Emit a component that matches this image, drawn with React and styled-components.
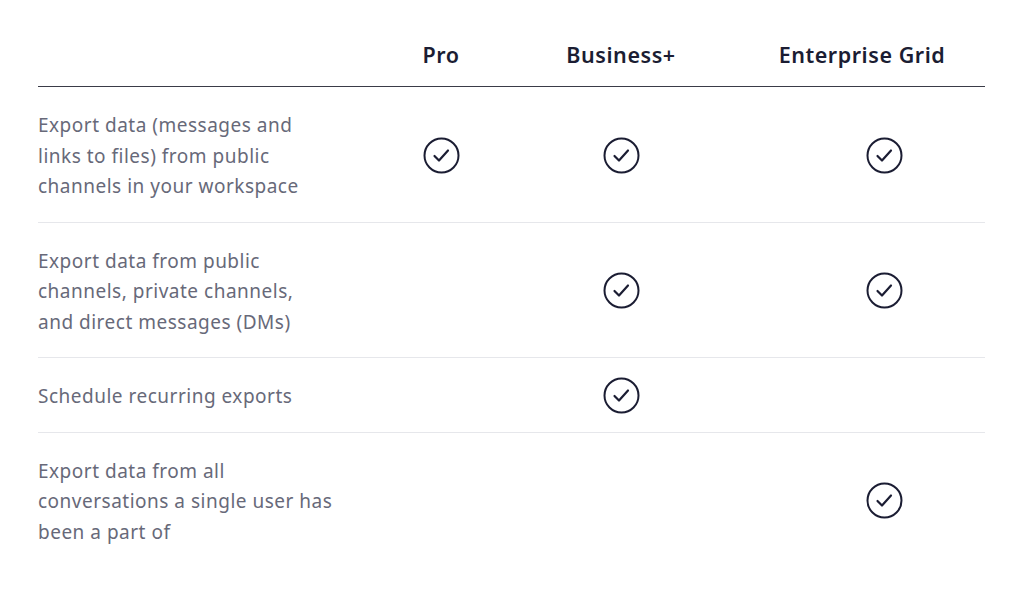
import React from "react";
import styled, { createGlobalStyle } from "styled-components";

const Global = createGlobalStyle`
  html, body { margin: 0; padding: 0; background: #ffffff; }
  body { font-family: "Noto Sans", "Open Sans", sans-serif; -webkit-font-smoothing: antialiased; }
`;

const Page = styled.div`
  padding: 0 39px 0 38px;
`;

const Table = styled.div`
  display: grid;
  grid-template-columns: 313px 180px 180px 1fr;
`;

const HeaderCell = styled.div`
  height: 87px;
  display: flex;
  align-items: center;
  justify-content: center;
  padding: 22px 0 0 ${(p) => p.$inset || 0}px;
  box-sizing: border-box;
  border-bottom: 1px solid #3a3b47;
  font-size: 21.5px;
  font-weight: 600;
  letter-spacing: 0.55px;
  color: #1b1d33;
`;

const Label = styled.div`
  padding: 23px 0 20px 0;
  font-size: 19px;
  line-height: 30.5px;
  letter-spacing: 0.5px;
  color: #676979;
  border-bottom: ${(p) => (p.$last ? "none" : "1px solid #e6e7eb")};
  white-space: nowrap;
`;

const Line = styled.div``;

const CheckCell = styled.div`
  display: flex;
  align-items: center;
  justify-content: center;
  padding: 2px 0 0 ${(p) => p.$inset || 0}px;
  border-bottom: ${(p) => (p.$last ? "none" : "1px solid #e6e7eb")};
`;

const CheckIcon = () => (
  <svg width="37" height="37" viewBox="0 0 37 37" fill="none">
    <circle cx="18.5" cy="18.5" r="17" stroke="#1b1d33" strokeWidth="2" />
    <path
      d="M11.5 19 L16 23.5 L25 13.5"
      stroke="#1b1d33"
      strokeWidth="2.2"
      strokeLinecap="round"
      strokeLinejoin="round"
    />
  </svg>
);

const columns = [
  { name: "Pro", inset: 0, checkInset: 0 },
  { name: "Business+", inset: 0, checkInset: 0 },
  { name: "Enterprise Grid", inset: 28, checkInset: 72 },
];

const rows = [
  {
    lines: ["Export data (messages and", "links to files) from public", "channels in your workspace"],
    checks: [true, true, true],
  },
  {
    lines: ["Export data from public", "channels, private channels,", "and direct messages (DMs)"],
    checks: [false, true, true],
  },
  { lines: ["Schedule recurring exports"], checks: [false, true, false] },
  {
    lines: ["Export data from all", "conversations a single user has", "been a part of"],
    checks: [false, false, true],
  },
];

export default function App() {
  return (
    <Page>
      <Global />
      <Table>
        <HeaderCell />
        {columns.map((c) => (
          <HeaderCell key={c.name} $inset={c.inset}>
            {c.name}
          </HeaderCell>
        ))}
        {rows.map((r, i) => {
          const last = i === rows.length - 1;
          return (
            <React.Fragment key={i}>
              <Label $last={last}>
                {r.lines.map((l) => (
                  <Line key={l}>{l}</Line>
                ))}
              </Label>
              {r.checks.map((c, j) => (
                <CheckCell key={j} $last={last} $inset={columns[j].checkInset}>
                  {c ? <CheckIcon /> : null}
                </CheckCell>
              ))}
            </React.Fragment>
          );
        })}
      </Table>
    </Page>
  );
}
